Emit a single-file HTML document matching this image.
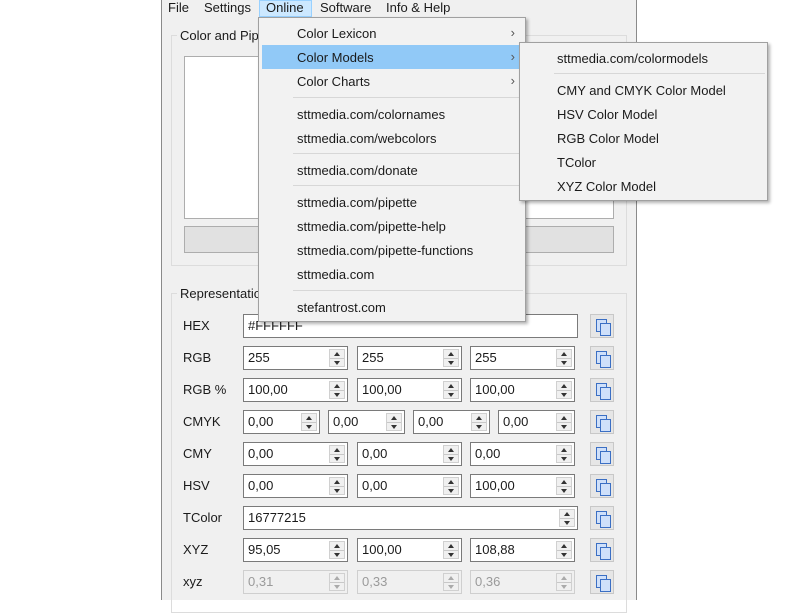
<!DOCTYPE html>
<html><head><meta charset="utf-8"><style>
*{box-sizing:border-box;margin:0;padding:0}
body{width:800px;height:600px;background:#fff;position:relative;overflow:hidden;font-family:"Liberation Sans",sans-serif;font-size:13px;color:#1a1a1a}
.a{position:absolute}
.win{left:161px;top:0;width:476px;height:600px;background:#f0f0f0;border-left:1px solid #8a8a8a;border-right:1px solid #8a8a8a}
.grp{border:1px solid #dcdcdc}
.lbl{background:#f0f0f0;padding:0 3px}
.f{background:#fff;border:1px solid #7a7a7a;height:24px;padding:3px 0 0 4px}
.f.d{background:#f0f0f0;border-color:#cfcfcf;color:#9a9a9a}
.sp{position:absolute;right:2px;top:2px;width:16px;height:18px;border:1px solid #d0d0d0;background:#f0f0f0}
.sp:before{content:"";position:absolute;left:4px;top:2px;border:3px solid transparent;border-bottom:4px solid #333;border-top:0}
.sp:after{content:"";position:absolute;left:4px;top:11px;border:3px solid transparent;border-top:4px solid #333;border-bottom:0}
.sp i{position:absolute;left:0;right:0;top:8px;border-top:1px solid #c8c8c8}
.d .sp:before{border-bottom-color:#aaa}.d .sp:after{border-top-color:#aaa}
.cb{width:24px;height:24px;border:1px solid #c8c8c8;background:#e6e6e6}
.cb:before,.cb:after{content:"";position:absolute;width:9px;height:11px;border:1px solid #3b6fc4;background:#cfe0fa}
.cb:before{left:5px;top:4px}.cb:after{left:9px;top:8px}
.rl{left:183px}
.menu{background:#f2f2f2;border:1px solid #a0a0a0;box-shadow:2px 2px 3px rgba(0,0,0,.3)}
.mi{position:absolute;left:0;right:0;height:24px;padding-top:5px}
.sep{position:absolute;height:1px;background:#d7d7d7}
.arr{position:absolute;right:10px;top:4px;color:#555}
</style></head><body>
<div class="a win"></div>
<!-- menu bar -->
<div class="a" style="left:259px;top:0;width:53px;height:17px;background:#cce8ff;border:1px solid #99d1ff"></div>
<div class="a" style="left:168px;top:0">File</div>
<div class="a" style="left:204px;top:0">Settings</div>
<div class="a" style="left:266px;top:0">Online</div>
<div class="a" style="left:320px;top:0">Software</div>
<div class="a" style="left:386px;top:0">Info &amp; Help</div>
<!-- group 1 -->
<div class="a grp" style="left:171px;top:35px;width:456px;height:231px"></div>
<div class="a lbl" style="left:177px;top:28px">Color and Pipette</div>
<div class="a" style="left:184px;top:56px;width:430px;height:163px;background:#fff;border:1px solid #adadad"></div>
<div class="a" style="left:184px;top:226px;width:430px;height:27px;background:#e1e1e1;border:1px solid #adadad;text-align:center;padding-top:5px">Pipette</div>
<!-- group 2 -->
<div class="a grp" style="left:171px;top:293px;width:456px;height:320px"></div>
<div class="a lbl" style="left:177px;top:286px">Representations</div>

<div class="a rl" style="top:318px">HEX</div>
<div class="a f" style="left:243px;top:314px;width:335px">#FFFFFF</div>
<div class="a cb" style="left:590px;top:314px"></div>

<div class="a rl" style="top:350px">RGB</div>
<div class="a f" style="left:243px;top:346px;width:105px">255<span class="sp"><i></i></span></div>
<div class="a f" style="left:357px;top:346px;width:105px">255<span class="sp"><i></i></span></div>
<div class="a f" style="left:470px;top:346px;width:105px">255<span class="sp"><i></i></span></div>
<div class="a cb" style="left:590px;top:346px"></div>

<div class="a rl" style="top:382px">RGB %</div>
<div class="a f" style="left:243px;top:378px;width:105px">100,00<span class="sp"><i></i></span></div>
<div class="a f" style="left:357px;top:378px;width:105px">100,00<span class="sp"><i></i></span></div>
<div class="a f" style="left:470px;top:378px;width:105px">100,00<span class="sp"><i></i></span></div>
<div class="a cb" style="left:590px;top:378px"></div>

<div class="a rl" style="top:414px">CMYK</div>
<div class="a f" style="left:243px;top:410px;width:77px">0,00<span class="sp"><i></i></span></div>
<div class="a f" style="left:328px;top:410px;width:77px">0,00<span class="sp"><i></i></span></div>
<div class="a f" style="left:413px;top:410px;width:77px">0,00<span class="sp"><i></i></span></div>
<div class="a f" style="left:498px;top:410px;width:77px">0,00<span class="sp"><i></i></span></div>
<div class="a cb" style="left:590px;top:410px"></div>

<div class="a rl" style="top:446px">CMY</div>
<div class="a f" style="left:243px;top:442px;width:105px">0,00<span class="sp"><i></i></span></div>
<div class="a f" style="left:357px;top:442px;width:105px">0,00<span class="sp"><i></i></span></div>
<div class="a f" style="left:470px;top:442px;width:105px">0,00<span class="sp"><i></i></span></div>
<div class="a cb" style="left:590px;top:442px"></div>

<div class="a rl" style="top:478px">HSV</div>
<div class="a f" style="left:243px;top:474px;width:105px">0,00<span class="sp"><i></i></span></div>
<div class="a f" style="left:357px;top:474px;width:105px">0,00<span class="sp"><i></i></span></div>
<div class="a f" style="left:470px;top:474px;width:105px">100,00<span class="sp"><i></i></span></div>
<div class="a cb" style="left:590px;top:474px"></div>

<div class="a rl" style="top:510px">TColor</div>
<div class="a f" style="left:243px;top:506px;width:335px">16777215<span class="sp"><i></i></span></div>
<div class="a cb" style="left:590px;top:506px"></div>

<div class="a rl" style="top:542px">XYZ</div>
<div class="a f" style="left:243px;top:538px;width:105px">95,05<span class="sp"><i></i></span></div>
<div class="a f" style="left:357px;top:538px;width:105px">100,00<span class="sp"><i></i></span></div>
<div class="a f" style="left:470px;top:538px;width:105px">108,88<span class="sp"><i></i></span></div>
<div class="a cb" style="left:590px;top:538px"></div>

<div class="a rl" style="top:574px">xyz</div>
<div class="a f d" style="left:243px;top:570px;width:105px">0,31<span class="sp"><i></i></span></div>
<div class="a f d" style="left:357px;top:570px;width:105px">0,33<span class="sp"><i></i></span></div>
<div class="a f d" style="left:470px;top:570px;width:105px">0,36<span class="sp"><i></i></span></div>
<div class="a cb" style="left:590px;top:570px"></div>

<!-- dropdown -->
<div class="a menu" style="left:258px;top:17px;width:268px;height:305px">
 <div class="mi" style="top:3px;padding-left:38px">Color Lexicon<span class="arr">&#8250;</span></div>
 <div class="mi" style="top:27px;left:3px;right:5px;background:#91c9f7;padding-left:35px">Color Models<span class="arr" style="right:5px">&#8250;</span></div>
 <div class="mi" style="top:51px;padding-left:38px">Color Charts<span class="arr">&#8250;</span></div>
 <div class="sep" style="left:34px;right:2px;top:79px"></div>
 <div class="mi" style="top:84px;padding-left:38px">sttmedia.com/colornames</div>
 <div class="mi" style="top:108px;padding-left:38px">sttmedia.com/webcolors</div>
 <div class="sep" style="left:34px;right:2px;top:135px"></div>
 <div class="mi" style="top:140px;padding-left:38px">sttmedia.com/donate</div>
 <div class="sep" style="left:34px;right:2px;top:167px"></div>
 <div class="mi" style="top:172px;padding-left:38px">sttmedia.com/pipette</div>
 <div class="mi" style="top:196px;padding-left:38px">sttmedia.com/pipette-help</div>
 <div class="mi" style="top:220px;padding-left:38px">sttmedia.com/pipette-functions</div>
 <div class="mi" style="top:244px;padding-left:38px">sttmedia.com</div>
 <div class="sep" style="left:34px;right:2px;top:272px"></div>
 <div class="mi" style="top:277px;padding-left:38px">stefantrost.com</div>
</div>
<!-- submenu -->
<div class="a menu" style="left:519px;top:42px;width:249px;height:159px">
 <div class="mi" style="top:3px;padding-left:37px">sttmedia.com/colormodels</div>
 <div class="sep" style="left:34px;right:2px;top:30px"></div>
 <div class="mi" style="top:35px;padding-left:37px">CMY and CMYK Color Model</div>
 <div class="mi" style="top:59px;padding-left:37px">HSV Color Model</div>
 <div class="mi" style="top:83px;padding-left:37px">RGB Color Model</div>
 <div class="mi" style="top:107px;padding-left:37px">TColor</div>
 <div class="mi" style="top:131px;padding-left:37px">XYZ Color Model</div>
</div>
</body></html>
